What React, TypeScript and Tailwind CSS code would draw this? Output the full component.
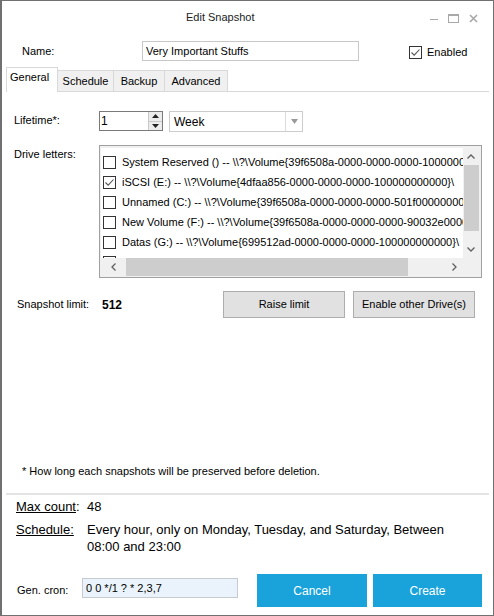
import { useState } from "react";

const drives = [
  { label: "System Reserved () -- \\\\?\\Volume{39f6508a-0000-0000-0000-100000000000}\\", checked: false },
  { label: "iSCSI (E:) -- \\\\?\\Volume{4dfaa856-0000-0000-0000-100000000000}\\", checked: true },
  { label: "Unnamed (C:) -- \\\\?\\Volume{39f6508a-0000-0000-0000-501f00000000}\\", checked: false },
  { label: "New Volume (F:) -- \\\\?\\Volume{39f6508a-0000-0000-0000-90032e000000}\\", checked: false },
  { label: "Datas (G:) -- \\\\?\\Volume{699512ad-0000-0000-0000-100000000000}\\", checked: false },
  { label: "Xtreme (D:) -- \\\\?\\Volume{4fd4690a-0a03-4bc6-8e2a-bdd4d3a8b6c5}\\", checked: false },
];

function CheckBox({ checked }: { checked: boolean }) {
  return (
    <div className="w-[13px] h-[13px] border border-[#333333] bg-white flex items-center justify-center shrink-0">
      {checked && (
        <svg width="11" height="11" viewBox="0 0 11 11" fill="none">
          <path d="M1.5 5.5 L4.2 8.2 L9.5 2.5" stroke="#555555" strokeWidth="1.1" />
        </svg>
      )}
    </div>
  );
}

export default function App() {
  const [tab, setTab] = useState("General");
  const tabs = [
    { name: "General", w: "w-[52px]" },
    { name: "Schedule", w: "w-[56px]" },
    { name: "Backup", w: "w-[51px]" },
    { name: "Advanced", w: "w-[63px]" },
  ];

  return (
    <div className="w-[494px] h-[616px] bg-white border border-l-2 border-[#707070] flex flex-col text-[11px] text-black font-['Liberation_Sans',Arial,sans-serif] overflow-hidden">
      {/* title bar */}
      <div className="h-[32px] flex items-center shrink-0">
        <div className="flex-1 pl-[184px] text-[11px] text-[#222]">Edit Snapshot</div>
        <div className="flex items-center gap-[10px] pr-[15px] pt-[3px]">
          <svg width="8" height="8" viewBox="0 0 8 8">
            <rect x="0" y="4" width="8" height="1" fill="#a8a8a8" />
          </svg>
          <svg width="11" height="9" viewBox="0 0 11 9">
            <rect x="0.5" y="0.5" width="10" height="8" fill="none" stroke="#a8a8a8" />
            <rect x="0" y="0" width="11" height="2" fill="#a8a8a8" />
          </svg>
          <svg width="9" height="9" viewBox="0 0 9 9">
            <path d="M1 1 L8 8 M8 1 L1 8" stroke="#a8a8a8" strokeWidth="1.6" />
          </svg>
        </div>
      </div>

      {/* name row */}
      <div className="mt-[8px] h-[20px] flex items-center shrink-0">
        <div className="w-[120px] pl-[20px] box-content">Name:</div>
        <div className="w-[217px] h-[20px] border border-[#c8c8c8] flex items-center pl-[3px]">Very Important Stuffs</div>
        <div className="ml-[50px] flex items-center pt-[2px]">
          <CheckBox checked />
          <span className="ml-[5px]">Enabled</span>
        </div>
      </div>

      {/* tabs */}
      <div className="mt-[6px] h-[25px] flex items-end pl-[4px] pr-[4px] shrink-0">
        {tabs.map((t) =>
          t.name === tab ? (
            <button
              key={t.name}
              onClick={() => setTab(t.name)}
              className={`${t.w} h-[25px] bg-white border-l border-t border-r border-[#d9d9d9] text-left pl-[3px] pb-[5px]`}
            >
              {t.name}
            </button>
          ) : (
            <button
              key={t.name}
              onClick={() => setTab(t.name)}
              className={`${t.w} h-[22px] bg-[#f0f0f0] border-t border-r border-b border-[#d9d9d9] text-center`}
            >
              {t.name}
            </button>
          )
        )}
        <div className="flex-1 border-b border-[#d9d9d9]" />
      </div>

      {/* panel */}
      <div className="h-[401px] shrink-0 flex flex-col">
        <div className="mt-[19px] h-[21px] flex items-center">
          <div className="w-[85px] pl-[12px] box-content -mt-[3px]">Lifetime*:</div>
          <div className="w-[64px] h-[20px] border border-[#7a7a7a] flex items-stretch self-start">
            <div className="flex-1 pl-[1px] text-[12px] leading-[18px]">1</div>
            <div className="w-[14px] flex flex-col border-l border-[#c8c8c8]">
              <div className="flex-1 bg-[#ececec] border-b border-[#c8c8c8] flex items-center justify-center">
                <svg width="7" height="4" viewBox="0 0 7 4"><path d="M0 4 L3.5 0 L7 4Z" fill="#222" /></svg>
              </div>
              <div className="flex-1 bg-[#ececec] flex items-center justify-center">
                <svg width="7" height="4" viewBox="0 0 7 4"><path d="M0 0 L3.5 4 L7 0Z" fill="#222" /></svg>
              </div>
            </div>
          </div>
          <div className="ml-[6px] w-[134px] h-[21px] border border-[#cccccc] bg-white flex items-center">
            <div className="flex-1 pl-[4px] text-[12px]">Week</div>
            <div className="w-[17px] h-full border-l border-[#dcdcdc] flex items-center justify-center">
              <svg width="7" height="5" viewBox="0 0 7 5"><path d="M0 0 L7 0 L3.5 5Z" fill="#9a9a9a" /></svg>
            </div>
          </div>
        </div>

        <div className="mt-[13px] flex items-start">
          <div className="w-[85px] pl-[12px] box-content pt-[1px]">Drive letters:</div>
          <div className="w-[383px] h-[133px] border border-[#a0a0a0] bg-[#f0f0f0] p-[2px] pl-[1px] pt-[2px] flex flex-col">
            <div className="flex h-[110px]">
              <div className="flex-1 bg-white overflow-hidden pt-[4px] pl-[2px]">
                {drives.map((d) => (
                  <div key={d.label} className="h-[20px] flex items-center whitespace-nowrap">
                    <CheckBox checked={d.checked} />
                    <span className="ml-[6px]">{d.label}</span>
                  </div>
                ))}
              </div>
              <div className="w-[16px] bg-[#f0f0f0] flex flex-col items-center">
                <div className="h-[17px] flex items-center justify-center">
                  <svg width="8" height="5" viewBox="0 0 8 5"><path d="M0.5 4.5 L4 1 L7.5 4.5" stroke="#606060" strokeWidth="1.3" fill="none" /></svg>
                </div>
                <div className="w-[15px] h-[66px] bg-[#cdcdcd]" />
                <div className="flex-1" />
                <div className="h-[17px] flex items-center justify-center">
                  <svg width="8" height="5" viewBox="0 0 8 5"><path d="M0.5 0.5 L4 4 L7.5 0.5" stroke="#606060" strokeWidth="1.3" fill="none" /></svg>
                </div>
              </div>
            </div>
            <div className="flex h-[18px] bg-[#f0f0f0]">
              <div className="w-[25px] flex items-center justify-center">
                <svg width="5" height="8" viewBox="0 0 5 8"><path d="M4.5 0.5 L1 4 L4.5 7.5" stroke="#606060" strokeWidth="1.3" fill="none" /></svg>
              </div>
              <div className="w-[282px] h-[18px] bg-[#cdcdcd]" />
              <div className="flex-1 flex items-center justify-end pr-[6px]">
                <svg width="5" height="8" viewBox="0 0 5 8"><path d="M0.5 0.5 L4 4 L0.5 7.5" stroke="#606060" strokeWidth="1.3" fill="none" /></svg>
              </div>
              <div className="w-[16px]" />
            </div>
          </div>
        </div>

        <div className="mt-[13px] h-[27px] flex items-center">
          <div className="w-[85px] pl-[15px] box-content">Snapshot limit:</div>
          <div className="w-[121px] font-bold text-[12px]">512</div>
          <button className="w-[122px] h-[27px] bg-[#e1e1e1] border border-[#adadad]">Raise limit</button>
          <button className="ml-[8px] w-[122px] h-[27px] bg-[#e1e1e1] border border-[#adadad]">Enable other Drive(s)</button>
        </div>

        <div className="mt-auto mb-[14px] pl-[20px]">* How long each snapshots will be preserved before deletion.</div>
      </div>

      <div className="mx-[4px] h-[2px] bg-[#e3e3e3] shrink-0" />

      {/* summary */}
      <div className="mt-[3px] flex text-[13px] leading-[17px]">
        <div className="w-[71px] pl-[14px] box-content"><span className="underline">Max count</span>:</div>
        <div>48</div>
      </div>
      <div className="mt-[6px] flex text-[13px] leading-[17px]">
        <div className="w-[71px] pl-[14px] box-content"><span className="underline">Schedule:</span></div>
        <div className="w-[390px]">Every hour, only on Monday, Tuesday, and Saturday, Between 08:00 and 23:00</div>
      </div>

      <div className="mt-auto mb-[8px] flex items-center">
        <div className="w-[65px] pl-[15px] box-content">Gen. cron:</div>
        <div className="w-[156px] h-[20px] bg-[#eaf3fb] border border-[#c6cbd1] pl-[3px] flex items-center -mt-[5px]">0 0 */1 ? * 2,3,7</div>
        <button className="ml-[19px] w-[110px] h-[33px] bg-[#1aa3db] text-white text-[12px]">Cancel</button>
        <button className="ml-[6px] w-[109px] h-[33px] bg-[#1aa3db] text-white text-[12px]">Create</button>
      </div>
    </div>
  );
}
